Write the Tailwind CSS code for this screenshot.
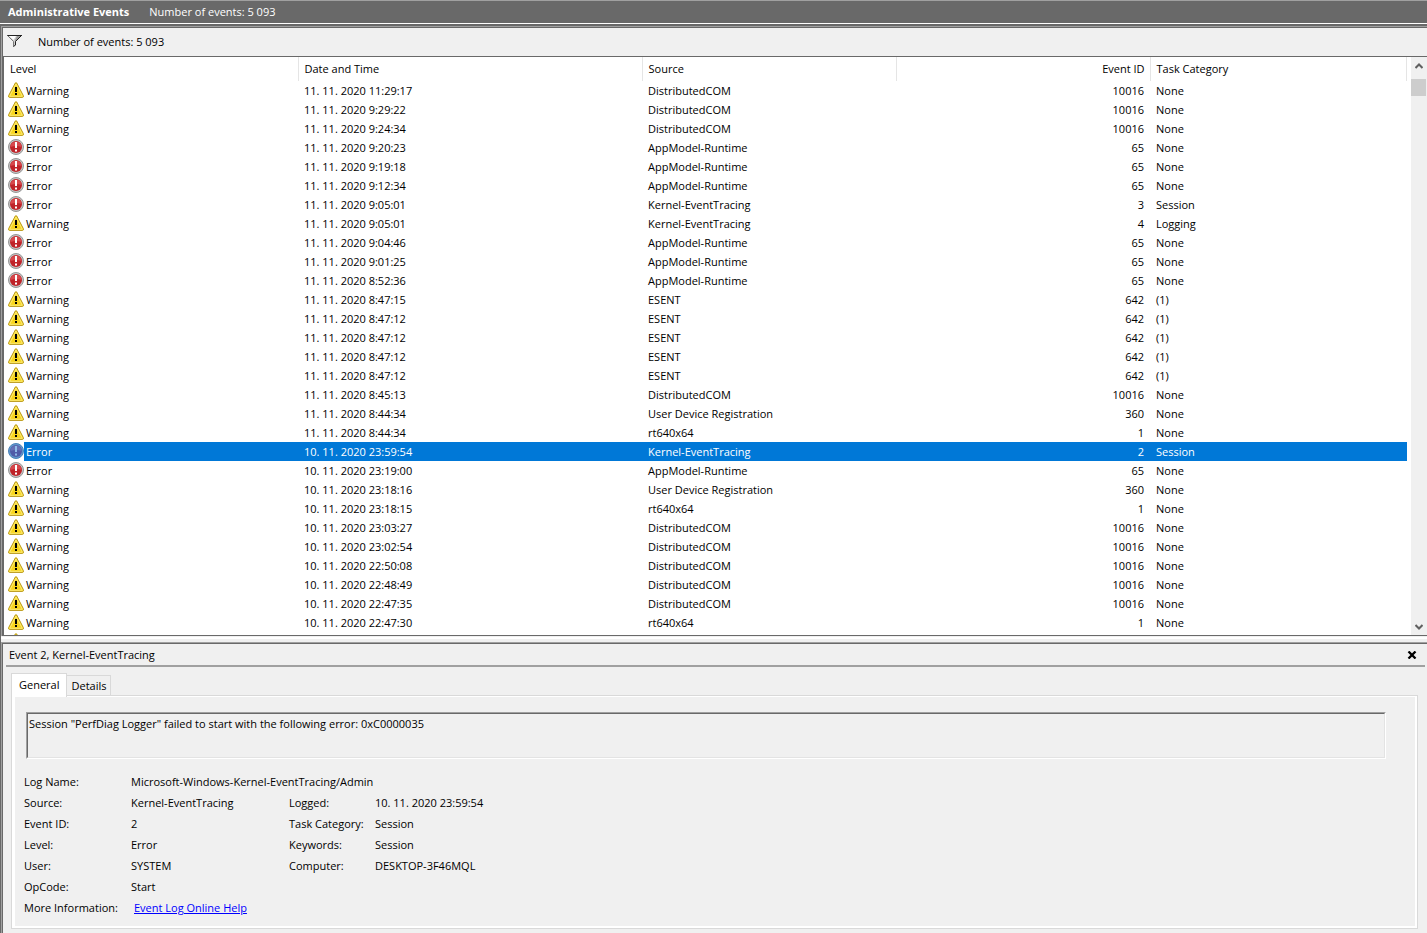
<!DOCTYPE html>
<html lang="en">
  <head>
    <meta charset="UTF-8" />
    <title>Administrative Events</title>
    <script src="https://cdn.jsdelivr.net/npm/@tailwindcss/browser@4"></script>
  </head>
  <body
    class="flex flex-col h-screen overflow-hidden bg-[#f0f0f0] text-black text-[11px] leading-[19px] font-['Open_Sans',sans-serif]"
  >
    <!-- Title bar -->
    <header
      class="flex items-center gap-5 h-[23px] shrink-0 px-2 pb-[2px] bg-[#696969] border-t border-[#a0a0a0] text-white"
    >
      <h1 class="font-bold">Administrative Events</h1>
      <span>Number of events: 5 093</span>
    </header>

    <main class="flex flex-col flex-1 min-h-0 border-t border-white">
      <div class="flex flex-col flex-1 min-h-0 border-t-2 border-l border-[#696969]">
        <!-- Event list -->
        <section
          class="flex flex-col flex-1 min-h-0 border-t border-l border-[#a0a0a0]"
        >
          <div class="flex flex-col flex-1 min-h-0 border-t border-l border-[#696969]">
            <div class="flex items-center gap-4 h-7 shrink-0 pl-1 pb-[2px]">
              <svg class="w-[15px] h-3" viewBox="0 0 15 12">
                <path d="M0 0.500H15" stroke="#222" />
                <path d="M1 1H14L9 6V10L6 12V6Z" fill="#d0d0d0" />
                <path d="M2 1H9L6.500 5Z" fill="#fff" />
                <path d="M10 1H13.500L9 5.500V10L8 10.500V5Z" fill="#999" />
                <path d="M0.500 0.500L6.500 6.500V11.500" fill="none" stroke="#777" />
                <path d="M14.500 0.500L8.500 6.500V10L6.500 11.500" fill="none" stroke="#222" />
              </svg>
              <span>Number of events: 5 093</span>
            </div>

            <div
              class="flex flex-1 min-h-0 bg-white border-y border-l border-[#696969]"
            >
              <div class="flex-1 min-w-0 overflow-hidden">
                <table class="w-full table-fixed">
                  <colgroup>
                    <col class="w-[294px]" />
                    <col class="w-[344px]" />
                    <col class="w-[254px]" />
                    <col class="w-[254px]" />
                    <col />
                  </colgroup>
                  <thead>
                    <tr class="h-6 text-left">
                      <th class="px-[6px] pb-[2px] font-normal border-r border-[#e5e5e5]">Level</th>
                      <th class="px-[6px] pb-[2px] font-normal border-r border-[#e5e5e5]">Date and Time</th>
                      <th class="px-[6px] pb-[2px] font-normal border-r border-[#e5e5e5]">Source</th>
                      <th class="px-[5px] pb-[2px] font-normal border-r border-[#e5e5e5] text-right">Event ID</th>
                      <th class="px-[6px] pb-[2px] font-normal border-r border-[#e5e5e5]">Task Category</th>
                    </tr>
                  </thead>
                  <tbody id="events"></tbody>
                </table>
              </div>
              <!-- Scrollbar -->
              <div class="flex flex-col justify-between w-4 ml-1 shrink-0 bg-[#f0f0f0]">
                <div>
                  <button class="block h-[22px] w-full pb-1" aria-label="Scroll up">
                    <svg class="mx-auto w-2 h-[6px]" viewBox="0 0 8 6">
                      <path d="M0.500 5L4 1.500L7.500 5" fill="none" stroke="#606060" stroke-width="2" />
                    </svg>
                  </button>
                  <div class="mr-px h-[17px] bg-[#cdcdcd]"></div>
                </div>
                <button class="h-[17px] w-full" aria-label="Scroll down">
                  <svg class="mx-auto w-2 h-[6px]" viewBox="0 0 8 6">
                    <path d="M0.500 1L4 4.500L7.500 1" fill="none" stroke="#606060" stroke-width="2" />
                  </svg>
                </button>
              </div>
            </div>
          </div>
        </section>

        <div class="h-[6px] shrink-0 pt-px">
          <div class="h-[2px] bg-white"></div>
        </div>

        <!-- Event preview -->
        <section
          class="flex flex-col h-[291px] shrink-0 border-t border-l border-[#a0a0a0]"
        >
          <div class="flex flex-col flex-1 border-t border-l border-[#696969]">
            <div
              class="flex items-center justify-between h-[23px] ml-[3px] mr-[2px] pl-[3px] pr-2 border-b-2 border-[#a0a0a0]"
            >
              <h2>Event 2, Kernel-EventTracing</h2>
              <button aria-label="Close">
                <svg class="w-[10px] h-2" viewBox="0 0 10 8">
                  <path d="M1.500 0.500L8.500 7.500M8.500 0.500L1.500 7.500" stroke="#000" stroke-width="2.300" />
                </svg>
              </button>
            </div>

            <div class="flex flex-col flex-1 pt-[6px] pl-2 pr-[9px] pb-1">
              <div class="flex items-end">
                <button class="relative z-10 h-6 -mb-[2px] px-[7px] pb-[3px] bg-white border border-b-0 border-[#d9d9d9]">General</button>
                <button class="h-5 px-1 border border-l-0 border-b-0 border-[#d9d9d9]">Details</button>
              </div>
              <div class="flex-1 border border-[#d9d9d9]">
                <div class="h-full border-y-2 border-l-3 border-r-2 border-t border-white pt-[15px] px-[11px]">
                  <div class="mr-[18px] border border-t-[#a0a0a0] border-l-[#a0a0a0] border-b-white border-r-white">
                    <div
                      class="h-[45px] pl-px border border-t-[#696969] border-l-[#696969] border-b-[#e3e3e3] border-r-[#e3e3e3]"
                    >
                      Session "PerfDiag Logger" failed to start with the following error: 0xC0000035
                    </div>
                  </div>
                  <dl
                    class="grid grid-cols-[107px_158px_86px_1fr] leading-[21px] mt-3 -ml-[2px]"
                  >
                    <dt>Log Name:</dt>
                    <dd class="col-span-3">Microsoft-Windows-Kernel-EventTracing/Admin</dd>
                    <dt>Source:</dt>
                    <dd>Kernel-EventTracing</dd>
                    <dt>Logged:</dt>
                    <dd>10. 11. 2020 23:59:54</dd>
                    <dt>Event ID:</dt>
                    <dd>2</dd>
                    <dt>Task Category:</dt>
                    <dd>Session</dd>
                    <dt>Level:</dt>
                    <dd>Error</dd>
                    <dt>Keywords:</dt>
                    <dd>Session</dd>
                    <dt>User:</dt>
                    <dd>SYSTEM</dd>
                    <dt>Computer:</dt>
                    <dd>DESKTOP-3F46MQL</dd>
                    <dt>OpCode:</dt>
                    <dd class="col-span-3">Start</dd>
                    <dt>More Information:</dt>
                    <dd class="col-span-3 pl-[3px]">
                      <a href="#" class="text-[#0000ff] underline">Event Log Online Help</a>
                    </dd>
                  </dl>
                </div>
              </div>
            </div>
          </div>
        </section>
      </div>
    </main>

    <script>
      const events = [
        ["Warning", "11. 11. 2020 11:29:17", "DistributedCOM", "10016", "None"],
        ["Warning", "11. 11. 2020 9:29:22", "DistributedCOM", "10016", "None"],
        ["Warning", "11. 11. 2020 9:24:34", "DistributedCOM", "10016", "None"],
        ["Error", "11. 11. 2020 9:20:23", "AppModel-Runtime", "65", "None"],
        ["Error", "11. 11. 2020 9:19:18", "AppModel-Runtime", "65", "None"],
        ["Error", "11. 11. 2020 9:12:34", "AppModel-Runtime", "65", "None"],
        ["Error", "11. 11. 2020 9:05:01", "Kernel-EventTracing", "3", "Session"],
        ["Warning", "11. 11. 2020 9:05:01", "Kernel-EventTracing", "4", "Logging"],
        ["Error", "11. 11. 2020 9:04:46", "AppModel-Runtime", "65", "None"],
        ["Error", "11. 11. 2020 9:01:25", "AppModel-Runtime", "65", "None"],
        ["Error", "11. 11. 2020 8:52:36", "AppModel-Runtime", "65", "None"],
        ["Warning", "11. 11. 2020 8:47:15", "ESENT", "642", "(1)"],
        ["Warning", "11. 11. 2020 8:47:12", "ESENT", "642", "(1)"],
        ["Warning", "11. 11. 2020 8:47:12", "ESENT", "642", "(1)"],
        ["Warning", "11. 11. 2020 8:47:12", "ESENT", "642", "(1)"],
        ["Warning", "11. 11. 2020 8:47:12", "ESENT", "642", "(1)"],
        ["Warning", "11. 11. 2020 8:45:13", "DistributedCOM", "10016", "None"],
        ["Warning", "11. 11. 2020 8:44:34", "User Device Registration", "360", "None"],
        ["Warning", "11. 11. 2020 8:44:34", "rt640x64", "1", "None"],
        ["Error", "10. 11. 2020 23:59:54", "Kernel-EventTracing", "2", "Session"],
        ["Error", "10. 11. 2020 23:19:00", "AppModel-Runtime", "65", "None"],
        ["Warning", "10. 11. 2020 23:18:16", "User Device Registration", "360", "None"],
        ["Warning", "10. 11. 2020 23:18:15", "rt640x64", "1", "None"],
        ["Warning", "10. 11. 2020 23:03:27", "DistributedCOM", "10016", "None"],
        ["Warning", "10. 11. 2020 23:02:54", "DistributedCOM", "10016", "None"],
        ["Warning", "10. 11. 2020 22:50:08", "DistributedCOM", "10016", "None"],
        ["Warning", "10. 11. 2020 22:48:49", "DistributedCOM", "10016", "None"],
        ["Warning", "10. 11. 2020 22:47:35", "DistributedCOM", "10016", "None"],
        ["Warning", "10. 11. 2020 22:47:30", "rt640x64", "1", "None"],
        // only the tip of this row's icon shows above the list's edge
        ["Warning", "", "", "", ""],
      ];
      const selected = 19;

      const warningIcon = `
        <svg class="w-4 h-4 shrink-0" viewBox="0 0 16 16">
          <path d="M7.300 1Q8 0 8.700 1L15.400 13.700Q15.800 15.300 14.500 15.400H1.500Q0.200 15.300 0.600 13.700Z" fill="#f8d51e" stroke="#b8981c" />
          <path d="M8 2L14.300 14.300H1.700Z" fill="none" stroke="#fdf08a" stroke-width="0.800" />
          <path d="M7 5H9V10H7ZM7 11H9V13H7Z" fill="#000" />
        </svg>`;

      function errorIcon(isSelected) {
        return `
        <svg class="w-4 h-4 shrink-0" viewBox="0 0 16 16">
          <circle cx="8" cy="8" r="7.500" fill="${isSelected ? "#6298cc" : "#c4c4c4"}" stroke="${isSelected ? "#4a82b8" : "#969696"}" />
          <circle cx="8" cy="8" r="6" fill="${isSelected ? "#4f5ba8" : "#bf2329"}" />
          <path d="M2.500 8A5.500 5.500 0 0 1 13.500 8Q8 6 2.500 8Z" fill="${isSelected ? "#6670b4" : "#d8484c"}" />
          <path d="M7 3H9V9H7ZM7 10.500H9V12.500H7Z" fill="${isSelected ? "#8fbbe8" : "#fff"}" />
        </svg>`;
      }

      document.getElementById("events").innerHTML = events
        .map(([level, date, source, id, category], i) => {
          const isSelected = i === selected;
          const fill = isSelected ? "bg-[#0078d7] text-white" : "";
          const icon = level === "Error" ? errorIcon(isSelected) : warningIcon;
          return `
          <tr class="h-[19px]">
            <td class="p-0 pl-1">
              <div class="flex items-start h-[19px]">
                <span class="pt-px">${icon}</span>
                <span class="flex-1 h-[19px] pl-[2px] ${fill}">${date ? level : ""}</span>
              </div>
            </td>
            <td class="py-0 px-[6px] ${fill}">${date}</td>
            <td class="py-0 px-[6px] ${fill}">${source}</td>
            <td class="py-0 px-[6px] text-right ${fill}">${id}</td>
            <td class="py-0 px-[6px] ${fill}">${category}</td>
          </tr>`;
        })
        .join("");
    </script>
  </body>
</html>
